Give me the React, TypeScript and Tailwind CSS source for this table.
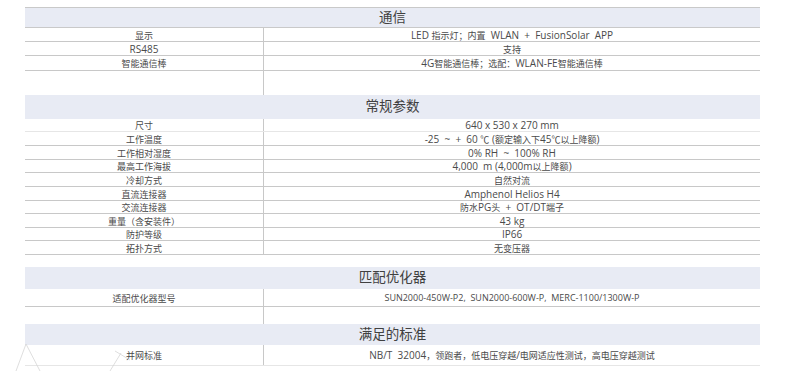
import React from 'react';

type Row = { label: string; value: string; h: string; line?: string; valueSize?: string };

const font = { fontFamily: '"Open Sans", "Noto Sans CJK SC", sans-serif' };

// CJK glyphs in the source render a touch smaller than the Latin text
const Mixed = ({ text }: { text: string }) => (
  <span className="whitespace-pre">
    {text.split(/([\u3000-\u303f\u4e00-\u9fff\uff00-\uffef℃]+)/).map((part, i) =>
      i % 2 === 1 ? (
        <span key={i} className="text-[9px]">
          {part}
        </span>
      ) : (
        <span key={i}>{part}</span>
      )
    )}
  </span>
);

const Header = ({ title, h, bordered }: { title: string; h: string; bordered?: boolean }) => (
  <div
    className={`flex items-center justify-center bg-[#e8ebf4] text-[13.5px] leading-none text-[#404040] ${h} ${
      bordered ? 'border-y border-[#c9c9c9]' : ''
    }`}
  >
    {title}
  </div>
);

const SpecRow = ({ row }: { row: Row }) => (
  <div className={`grid grid-cols-[238px_1fr] text-[10px] leading-none text-[#4a4a4a] ${row.h} ${row.line ?? 'border-b border-[#c8c8c8]'}`}>
    <div className="flex items-center justify-center">
      <Mixed text={row.label} />
    </div>
    <div className={`flex items-center justify-center border-l border-[#c8c8c8] ${row.valueSize ?? ''}`}>
      <Mixed text={row.value} />
    </div>
  </div>
);

const EmptyRow = ({ h }: { h: string }) => (
  <div className={`grid grid-cols-[238px_1fr] ${h}`}>
    <div />
    <div className="border-l border-[#c8c8c8]" />
  </div>
);

const comm: Row[] = [
  { label: '显示', value: 'LED 指示灯；内置  WLAN  +  FusionSolar  APP', h: 'h-[14px]' },
  { label: 'RS485', value: '支持', h: 'h-[14px]' },
  { label: '智能通信棒', value: '4G智能通信棒；选配：WLAN-FE智能通信棒', h: 'h-[15px]' },
];

const general: Row[] = [
  { label: '尺寸', value: '640 x 530 x 270 mm', h: 'h-[13px]', line: 'border-b border-[#e6e6e6]' },
  { label: '工作温度', value: '-25  ~  +  60 ℃ (额定输入下45℃以上降额)', h: 'h-[14px]' },
  { label: '工作相对湿度', value: '0% RH  ~  100% RH', h: 'h-[14px]' },
  { label: '最高工作海拔', value: '4,000  m (4,000m以上降额)', h: 'h-[13px]' },
  { label: '冷却方式', value: '自然对流', h: 'h-[14px]' },
  { label: '直流连接器', value: 'Amphenol Helios H4', h: 'h-[14px]' },
  { label: '交流连接器', value: '防水PG头  +  OT/DT端子', h: 'h-[13px]' },
  { label: '重量（含安装件）', value: '43 kg', h: 'h-[14px]' },
  { label: '防护等级', value: 'IP66', h: 'h-[13px]' },
  { label: '拓扑方式', value: '无变压器', h: 'h-[14px]' },
];

export default function App() {
  return (
    <div className="relative h-[371px] w-[789px] overflow-hidden bg-white" style={font}>
      <div className="ml-[25px] w-[735px] pt-[7px]">
        {/* 通信 */}
        <Header title="通信" h="h-[21px]" bordered />
        {comm.map((r) => (
          <SpecRow key={r.label} row={r} />
        ))}
        <EmptyRow h="h-[24px]" />

        {/* 常规参数 */}
        <Header title="常规参数" h="h-[24px]" />
        {general.map((r) => (
          <SpecRow key={r.label} row={r} />
        ))}

        <div className="h-[12px]" />

        {/* 匹配优化器 */}
        <Header title="匹配优化器" h="h-[22px]" />
        <SpecRow
          row={{
            label: '适配优化器型号',
            value: 'SUN2000-450W-P2,  SUN2000-600W-P,  MERC-1100/1300W-P',
            h: 'h-[18px]',
            valueSize: 'text-[9px]',
          }}
        />
        <EmptyRow h="h-[17px]" />

        {/* 满足的标准 */}
        <Header title="满足的标准" h="h-[21px]" />
        <SpecRow
          row={{
            label: '并网标准',
            value: 'NB/T  32004，领跑者，低电压穿越/电网适应性测试，高电压穿越测试',
            h: 'h-[21px]',
            line: 'border-b border-[#e6e6e6]',
          }}
        />
      </div>

      {/* faint background strokes */}
      <svg className="pointer-events-none absolute left-0 top-0" width="789" height="371">
        <g stroke="#d6d6d6" strokeWidth="0.8" fill="none">
          <line x1="26" y1="344" x2="16" y2="371" />
          <line x1="26" y1="344" x2="40" y2="371" />
          <line x1="110" y1="371" x2="121" y2="353" />
          <line x1="115" y1="351" x2="130" y2="360" />
        </g>
      </svg>
    </div>
  );
}
